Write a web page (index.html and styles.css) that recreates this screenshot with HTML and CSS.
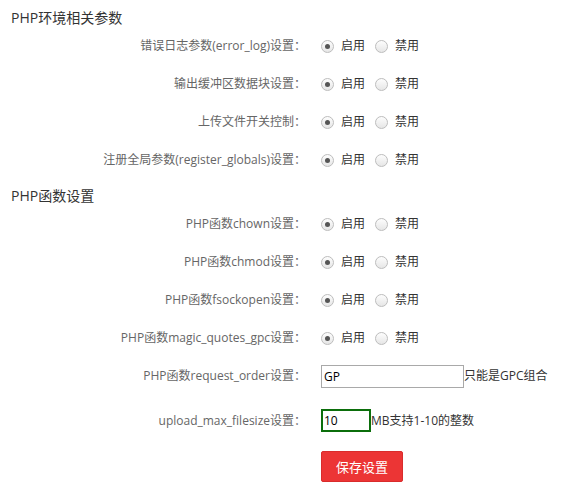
FILE: index.html
```html
<!DOCTYPE html>
<html>
<head>
<meta charset="utf-8">
<link rel="stylesheet" href="styles.css">
</head>
<body>
<div class="page">
  <div class="sec-title">PHP环境相关参数</div>
  <div class="row"><div class="label">错误日志参数(error_log)设置：</div><div class="ctrl"><span class="radio on"></span><span class="opt">启用</span><span class="radio"></span><span class="opt">禁用</span></div></div>
  <div class="row"><div class="label">输出缓冲区数据块设置：</div><div class="ctrl"><span class="radio on"></span><span class="opt">启用</span><span class="radio"></span><span class="opt">禁用</span></div></div>
  <div class="row"><div class="label">上传文件开关控制：</div><div class="ctrl"><span class="radio on"></span><span class="opt">启用</span><span class="radio"></span><span class="opt">禁用</span></div></div>
  <div class="row"><div class="label">注册全局参数(register_globals)设置：</div><div class="ctrl"><span class="radio on"></span><span class="opt">启用</span><span class="radio"></span><span class="opt">禁用</span></div></div>
  <div class="sec-title">PHP函数设置</div>
  <div class="row"><div class="label">PHP函数chown设置：</div><div class="ctrl"><span class="radio on"></span><span class="opt">启用</span><span class="radio"></span><span class="opt">禁用</span></div></div>
  <div class="row"><div class="label">PHP函数chmod设置：</div><div class="ctrl"><span class="radio on"></span><span class="opt">启用</span><span class="radio"></span><span class="opt">禁用</span></div></div>
  <div class="row"><div class="label">PHP函数fsockopen设置：</div><div class="ctrl"><span class="radio on"></span><span class="opt">启用</span><span class="radio"></span><span class="opt">禁用</span></div></div>
  <div class="row"><div class="label">PHP函数magic_quotes_gpc设置：</div><div class="ctrl"><span class="radio on"></span><span class="opt">启用</span><span class="radio"></span><span class="opt">禁用</span></div></div>
  <div class="row"><div class="label">PHP函数request_order设置：</div><div class="ctrl"><span class="field wide">GP</span><span class="hint">只能是GPC组合</span></div></div>
  <div class="row tall"><div class="label">upload_max_filesize设置：</div><div class="ctrl"><span class="field small focus">10</span><span class="hint">MB支持1-10的整数</span></div></div>
  <div class="row btn-row"><div class="label"></div><div class="ctrl"><span class="btn">保存设置</span></div></div>
</div>
</body>
</html>
```
FILE: styles.css
```css
html, body {
  margin: 0;
  padding: 0;
  background: #fff;
}
.page {
  font-family: "Open Sans", "Noto Sans CJK SC", sans-serif;
  font-size: 12px;
  color: #666;
}
.sec-title {
  box-sizing: border-box;
  height: 26px;
  padding: 8px 0 0 11px;
  line-height: 20px;
  font-size: 14px;
  color: #333;
}
.row {
  box-sizing: border-box;
  display: grid;
  grid-template-columns: 306px 1fr;
  align-items: center;
  height: 38px;
  padding-top: 2px;
}
.row.tall {
  height: 52px;
  padding-top: 1px;
}
.label {
  text-align: right;
  white-space: nowrap;
  line-height: 20px;
}
.ctrl {
  display: flex;
  align-items: center;
  padding-left: 15px;
  line-height: 20px;
  color: #333;
}
.radio {
  box-sizing: border-box;
  width: 13px;
  height: 13px;
  border-radius: 50%;
  border: 1px solid #bdbdbd;
  background: linear-gradient(#fdfdfd, #e6e6e6);
  position: relative;
  margin-right: 7px;
}
.radio.on::after {
  content: "";
  position: absolute;
  left: 3px;
  top: 3px;
  width: 5px;
  height: 5px;
  border-radius: 50%;
  background: #555;
}
.opt {
  margin-right: 10px;
}
.field {
  box-sizing: border-box;
  height: 23px;
  border: 1px solid #a9a9a9;
  padding: 0 0 0 2px;
  line-height: 21px;
  color: #000;
  background: #fff;
}
.field.wide {
  width: 143px;
}
.field.small {
  width: 50px;
}
.field.focus {
  border: 2px solid #0b6e0b;
  padding-left: 1px;
  line-height: 19px;
}
.hint {
  color: #333;
}
.btn-row {
  height: 36px;
  padding-top: 0;
  align-items: end;
}
.btn {
  box-sizing: border-box;
  width: 82px;
  height: 31px;
  line-height: 31px;
  text-align: center;
  background: #ec3535;
  border: 1px solid #d92c2c;
  border-radius: 2px;
  color: #fff;
  font-size: 13px;
}
```
